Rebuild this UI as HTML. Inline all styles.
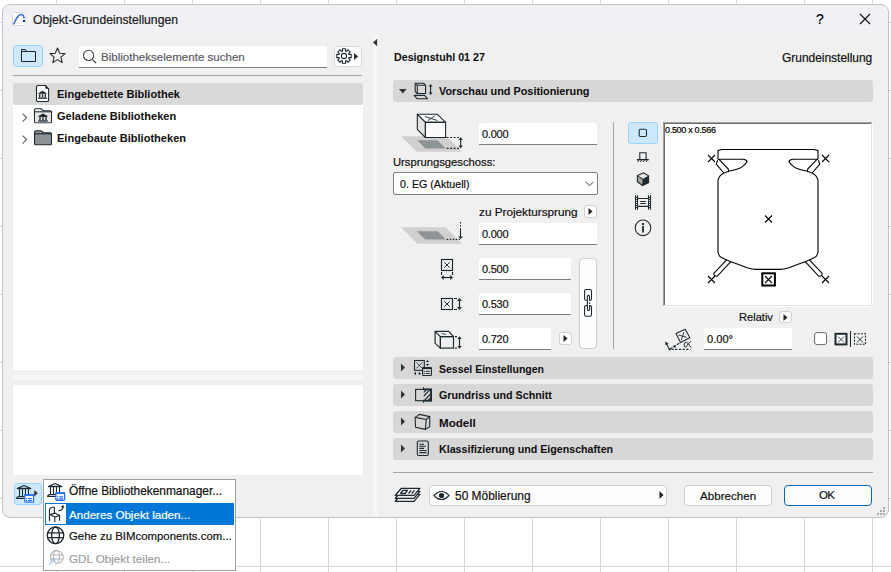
<!DOCTYPE html>
<html><head><meta charset="utf-8">
<style>
html,body{margin:0;padding:0;}
body{width:891px;height:572px;overflow:hidden;position:relative;background-color:#fff;
background-image:linear-gradient(to right,#d8d8d8 1px,transparent 1px),linear-gradient(to bottom,#d8d8d8 1px,transparent 1px);
background-size:68px 68px;background-position:56px 0,0 22px;
font-family:"Liberation Sans",sans-serif;color:#000;}
.a{position:absolute;}
.t{position:absolute;white-space:nowrap;line-height:1;-webkit-text-stroke:0.2px currentColor;}
.b{font-weight:bold;-webkit-text-stroke:0.06px currentColor;}
svg{position:absolute;overflow:visible;}
.dlg{left:2px;top:4px;width:885px;height:512px;border:1px solid #c3c3c3;border-radius:8px;background:#f0f0f0;overflow:hidden;}
.title{left:0;top:0;width:885px;height:30px;background:#f0f0f5;}
.inp{position:absolute;background:#fff;border-bottom:1px solid #7d7d7d;box-sizing:border-box;border-radius:2px 2px 0 0;}
.hdr{position:absolute;left:393px;width:480px;height:22px;background:#d7d7d7;border-radius:3px;}
.btn{position:absolute;box-sizing:border-box;background:#fdfdfd;border:1px solid #cfcfcf;border-radius:4px;}
.tbtn{position:absolute;box-sizing:border-box;background:#cce8ff;border:1px solid #99d1ff;border-radius:3px;}
</style></head><body>
<!-- dialog frame -->
<div class="a dlg"><div class="a title"></div></div>

<!-- title -->
<svg style="left:12px;top:12px" width="14" height="14" viewBox="0 0 14 14">
<rect x="0.5" y="0.5" width="13" height="13" fill="#fff" stroke="#dcdcdc" stroke-width="1" rx="1"/>
<path d="M1.5 12.5 C4 7 6 2.5 9 2.5 C11 2.5 12 4.5 12 6.5" fill="none" stroke="#3a6fe0" stroke-width="1.6"/>
<rect x="11" y="8" width="2" height="2" fill="#0a2a9a"/>
</svg>
<div class="t" id="ttl" style="left:33px;top:14px;font-size:12.2px;color:#1a1a1a;">Objekt-Grundeinstellungen</div>
<div class="t" style="left:816px;top:12px;font-size:14px;color:#000;">?</div>
<svg style="left:860px;top:14px" width="10" height="10" viewBox="0 0 10 10"><path d="M0 0L10 10M10 0L0 10" stroke="#111" stroke-width="1.1"/></svg>

<!-- LEFT PANEL -->
<div class="tbtn" style="left:13px;top:45px;width:30px;height:22px;"></div>
<svg style="left:21px;top:49px" width="15" height="13" viewBox="0 0 15 13"><path d="M0.5 12.5V0.5H4.5L5.5 2.5H14.5V12.5Z" fill="none" stroke="#222" stroke-width="1"/><path d="M0.5 2.5H5.5" stroke="#222" stroke-width="1"/></svg>
<svg style="left:49px;top:47px" width="17" height="17" viewBox="0 0 17 17"><path d="M8.5 1L10.7 6.2L16 6.6L11.9 10.1L13.2 15.6L8.5 12.6L3.8 15.6L5.1 10.1L1 6.6L6.3 6.2Z" fill="none" stroke="#2a2a2a" stroke-width="1.1" stroke-linejoin="round"/></svg>

<div class="inp" style="left:79px;top:46px;width:248px;height:22px;"></div>
<svg style="left:83px;top:50px" width="14" height="14" viewBox="0 0 14 14"><circle cx="5.6" cy="5.4" r="5.1" fill="none" stroke="#444" stroke-width="1.1"/><path d="M9.6 9.6L13 13" stroke="#444" stroke-width="1.2"/></svg>
<div class="t" id="srch" style="left:101px;top:52px;font-size:11.55px;color:#5c5c66;">Bibliothekselemente suchen</div>

<div class="btn" style="left:334px;top:46px;width:28px;height:21px;border-color:#d9d9d9;background:#fff;"></div>
<svg style="left:332px;top:44px" width="32" height="26" viewBox="332 44 32 26">
<path d="M342.48 51.03 L342.34 48.79 L345.66 48.79 L345.52 51.03 A5.2 5.2 0 0 1 346.44 51.41 L347.92 49.72 L350.28 52.08 L348.59 53.56 A5.2 5.2 0 0 1 348.97 54.48 L351.21 54.34 L351.21 57.66 L348.97 57.52 A5.2 5.2 0 0 1 348.59 58.44 L350.28 59.92 L347.92 62.28 L346.44 60.59 A5.2 5.2 0 0 1 345.52 60.97 L345.66 63.21 L342.34 63.21 L342.48 60.97 A5.2 5.2 0 0 1 341.56 60.59 L340.08 62.28 L337.72 59.92 L339.41 58.44 A5.2 5.2 0 0 1 339.03 57.52 L336.79 57.66 L336.79 54.34 L339.03 54.48 A5.2 5.2 0 0 1 339.41 53.56 L337.72 52.08 L340.08 49.72 L341.56 51.41 A5.2 5.2 0 0 1 342.48 51.03 Z" fill="none" stroke="#1e2a30" stroke-width="1.1" stroke-linejoin="round"/>
<circle cx="344" cy="56" r="2.6" fill="none" stroke="#1e2a30" stroke-width="1.1"/>
<path d="M354 52.9L358.2 56.4L354 59.9Z" fill="#333"/>
</svg>

<div class="a" style="left:13px;top:75px;width:349px;height:1px;background:#a3a3a3;"></div>
<div class="a" style="left:13px;top:83px;width:350px;height:287px;background:#fff;"></div>
<div class="a" style="left:13px;top:83px;width:350px;height:22px;background:#d9d9d9;border-radius:2px;"></div>

<!-- tree row icons -->
<svg style="left:34px;top:84px" width="18" height="20" viewBox="34 84 18 20">
<path d="M36.5 86.8Q36.5 85.5 37.8 85.5H45.3L48.6 88.8V100.2Q48.6 101.5 47.3 101.5H37.8Q36.5 101.5 36.5 100.2Z" fill="#fff" stroke="#1e2a30" stroke-width="1.1" stroke-linejoin="round"/>
<path d="M45.3 85.5V88.8H48.6Z" fill="#1e2a30"/>
<path d="M38.3 93.2L42.5 90.8L46.7 93.2Z" fill="#1e2a30"/><rect x="38.4" y="93.2" width="8.2" height="1" fill="#1e2a30"/>
<rect x="39" y="94.4" width="1.4" height="3" fill="#1e2a30"/><rect x="41.8" y="94.4" width="1.4" height="3" fill="#1e2a30"/><rect x="44.6" y="94.4" width="1.4" height="3" fill="#1e2a30"/>
<rect x="38" y="97.5" width="9" height="1.3" fill="#1e2a30"/>
</svg>
<div class="t b" style="left:57px;top:89px;font-size:11px;letter-spacing:0.03px;color:#111;">Eingebettete Bibliothek</div>

<svg style="left:21px;top:113px" width="7" height="10" viewBox="0 0 7 10"><path d="M1.6 0.6L5.6 4.6L1.6 8.6" fill="none" stroke="#666" stroke-width="1.2"/></svg>
<svg style="left:32px;top:106px" width="22" height="19" viewBox="32 106 22 19">
<path d="M34.5 121.5V110Q34.5 108.7 35.8 108.7H40.5Q41.5 108.7 42.3 109.6L43.3 110.7H50.2Q51.5 110.7 51.5 112V121.5Q51.5 122.8 50.2 122.8H35.8Q34.5 122.8 34.5 121.5Z" fill="#fff" stroke="#1e2a30" stroke-width="1.1"/>
<rect x="35.1" y="112.4" width="15.8" height="9.8" fill="#e6e6e6"/>
<path d="M34.5 111.8H51.5" stroke="#1e2a30" stroke-width="1.1"/>
<path d="M38.5 116L43 113.6L47.5 116Z" fill="#1e2a30"/><rect x="38.6" y="116" width="8.8" height="1" fill="#1e2a30"/>
<rect x="39.3" y="117.2" width="1.4" height="3" fill="#1e2a30"/><rect x="42.3" y="117.2" width="1.4" height="3" fill="#1e2a30"/><rect x="45.3" y="117.2" width="1.4" height="3" fill="#1e2a30"/>
<rect x="38.3" y="120.3" width="9.4" height="1.3" fill="#1e2a30"/>
</svg>
<div class="t b" style="left:57px;top:111px;font-size:11px;letter-spacing:0.03px;color:#111;">Geladene Bibliotheken</div>

<svg style="left:21px;top:135px" width="7" height="10" viewBox="0 0 7 10"><path d="M1.6 0.6L5.6 4.6L1.6 8.6" fill="none" stroke="#666" stroke-width="1.2"/></svg>
<svg style="left:32px;top:128px" width="22" height="19" viewBox="32 128 22 19">
<path d="M34.5 143.5V132Q34.5 130.7 35.8 130.7H40.5Q41.5 130.7 42.3 131.6L43.3 132.7H50.2Q51.5 132.7 51.5 134V143.5Q51.5 144.8 50.2 144.8H35.8Q34.5 144.8 34.5 143.5Z" fill="#8c9196" stroke="#1e2a30" stroke-width="1.1"/>
<path d="M34.5 133.8H51.5" stroke="#1e2a30" stroke-width="1.1"/>
</svg>
<div class="t b" style="left:57px;top:133px;font-size:11px;letter-spacing:0.03px;color:#111;">Eingebaute Bibliotheken</div>

<div class="a" style="left:13px;top:375px;width:350px;height:5px;background:#f7f7f7;"></div>
<div class="a" style="left:13px;top:385px;width:350px;height:90px;background:#fff;"></div>

<div class="tbtn" style="left:14px;top:483px;width:28px;height:22px;"></div>

<!-- splitter -->
<div class="a" style="left:373px;top:35px;width:5px;height:482px;background:#f6f6f6;"></div>
<svg style="left:370px;top:36px" width="10" height="12" viewBox="370 36 10 12"><path d="M377.2 38.7L373 42.45L377.2 46.2Z" fill="#333"/></svg>


<!-- RIGHT PANEL -->
<div class="t b" style="left:394px;top:52px;font-size:10.7px;color:#111;">Designstuhl 01 27</div>
<div class="t" style="left:782px;top:53px;font-size:11.95px;color:#111;">Grundeinstellung</div>

<div class="hdr" style="top:80px;"></div>
<svg style="left:399px;top:89px" width="8" height="5" viewBox="0 0 8 5"><path d="M0 0H7.5L3.75 4.5Z" fill="#333"/></svg>
<svg style="left:410px;top:80px" width="26" height="22" viewBox="0 0 26 22">
<g fill="none" stroke="#1e2a30" stroke-width="1.1" stroke-linejoin="round">
<path d="M5.2 11.5V3.3H13.7L15.6 5.2"/><path d="M5.2 3.3L7.3 5.2M5.2 11.5L7.3 13.5"/>
<rect x="7.3" y="5.2" width="8.3" height="8.3"/>
<path d="M4.2 15.4H14.6L17.5 18.7H7.1Z"/>
<path d="M20.6 5V14"/></g>
<path d="M18.7 6.5L20.6 4L22.5 6.5ZM18.7 12.5L20.6 15L22.5 12.5Z" fill="#1e2a30"/>
</svg>
<div class="t b" style="left:439px;top:86px;font-size:10.85px;color:#111;">Vorschau und Positionierung</div>

<!-- box elevation icon -->
<svg style="left:398px;top:110px" width="70" height="46" viewBox="398 110 70 46">
<path d="M401.1 136.3H446.6L462.2 151.7H416.8Z" fill="#d0d0d0"/>
<path d="M417.3 140.2H437.5L445.6 148.6H425.4Z" fill="#8e9396"/>
<g stroke="#1e2a30" stroke-width="1.1" stroke-linejoin="round">
<path d="M417.3 114.3H437.5L445.6 122.4H425.4Z" fill="#f8f8f8"/>
<path d="M417.3 114.3L425.4 122.4V137.5L417.3 129.4Z" fill="#e4e4e4"/>
<rect x="425.4" y="122.4" width="20.2" height="15.1" fill="#fafafa"/>
<path d="M425 116.5L437.5 120.5M428 120.5L434.5 116" fill="none" stroke-width="0.9"/>
<path d="M446.6 137.5H460M446.6 148.4H460" stroke-dasharray="2 1.5" fill="none"/>
<path d="M460.7 139V146.5" fill="none"/>
</g>
<path d="M458.5 140L460.7 137.3L462.9 140ZM458.5 145.5L460.7 148.2L462.9 145.5Z" fill="#1e2a30"/>
</svg>

<div class="inp" style="left:479px;top:123px;width:118px;height:22px;"></div>
<div class="t" style="left:482px;top:129px;font-size:11px;letter-spacing:-0.25px;color:#111;">0.000</div>

<div class="t" style="left:393px;top:157px;font-size:11.24px;color:#111;">Ursprungsgeschoss:</div>
<div class="a" style="left:393px;top:172px;width:205px;height:23px;box-sizing:border-box;background:#fff;border:1px solid #7f7f7f;border-radius:2px;"></div>
<div class="t" style="left:400px;top:179px;font-size:10.7px;color:#111;">0. EG (Aktuell)</div>
<svg style="left:585px;top:181px" width="9" height="6" viewBox="0 0 9 6"><path d="M0.5 0.8L4.5 4.8L8.5 0.8" fill="none" stroke="#444" stroke-width="1"/></svg>

<!-- vertical separator -->
<div class="a" style="left:613px;top:122px;width:1px;height:227px;background:#a8a8a8;"></div>

<div class="t" style="left:479px;top:206px;font-size:11.76px;color:#111;">zu Projektursprung</div>
<div class="btn" style="left:584px;top:205px;width:13px;height:13px;border-radius:3px;"></div>
<svg style="left:588px;top:208px" width="5" height="7" viewBox="0 0 5 7"><path d="M0.5 0L4.5 3.5L0.5 7Z" fill="#222"/></svg>

<svg style="left:398px;top:218px" width="70" height="30" viewBox="398 218 70 30">
<path d="M401.1 227.3H445.5L462 243.8H417.2Z" fill="#d0d0d0"/>
<path d="M416.9 231.2H437.7L445.9 239.6H425.1Z" fill="#8e9396"/>
<g stroke="#1e2a30" stroke-width="1.1" fill="none">
<path d="M446.7 239.4H460" stroke-dasharray="1.5 1.5"/>
<path d="M460.5 221.9V227.4" stroke-dasharray="1.5 1.5"/>
<path d="M460.5 228.2V237"/>
</g>
<path d="M458.1 236.5L460.5 239L462.9 236.5Z" fill="#1e2a30"/>
</svg>
<div class="inp" style="left:479px;top:223px;width:118px;height:22px;"></div>
<div class="t" style="left:482px;top:229px;font-size:11px;letter-spacing:-0.25px;color:#111;">0.000</div>

<svg style="left:432px;top:255px" width="36" height="100" viewBox="432 255 36 100">
<g stroke="#1e2a30" stroke-width="1.2" fill="none">
<rect x="441.5" y="259.5" width="11" height="11"/>
<path d="M444.3 262.3L449.7 267.7M449.7 262.3L444.3 267.7" stroke-width="1"/>
<path d="M441.5 272V275M452.5 272V275"/>
<path d="M443 277.5H451"/>
<rect x="441.5" y="298.5" width="11" height="11"/>
<path d="M444.3 301.3L449.7 306.7M449.7 301.3L444.3 306.7" stroke-width="1"/>
<path d="M454 298.5H457M454 309.5H457" />
<path d="M459.5 300V308"/>
<path d="M435.1 331.3H448.8L453.5 336.6H440.4ZM435.1 331.3V343.4L440.4 348.1V336.6" stroke-linejoin="round"/>
<rect x="440.4" y="336.6" width="13.1" height="11.5"/>
<path d="M441.5 333.5L446 334.5" stroke-width="0.8"/>
<path d="M455 336.6H457M455 348.1H457"/>
<path d="M459.5 338.5V346.5"/>
</g>
<g fill="#1e2a30">
<path d="M441 277.5L443.8 275V280ZM453 277.5L450.2 275V280Z"/>
<path d="M457 300.8L459.5 298L462 300.8ZM457 307.2L459.5 310L462 307.2Z"/>
<path d="M457.3 339L459.5 336.3L461.7 339ZM457.3 346L459.5 348.7L461.7 346Z"/>
</g>
</svg>

<div class="inp" style="left:479px;top:258px;width:92px;height:22px;"></div>
<div class="t" style="left:482px;top:264px;font-size:11px;letter-spacing:-0.25px;color:#111;">0.500</div>
<div class="inp" style="left:479px;top:293px;width:92px;height:22px;"></div>
<div class="t" style="left:482px;top:299px;font-size:11px;letter-spacing:-0.25px;color:#111;">0.530</div>
<div class="inp" style="left:479px;top:328px;width:72px;height:22px;"></div>
<div class="t" style="left:482px;top:334px;font-size:11px;letter-spacing:-0.25px;color:#111;">0.720</div>
<div class="btn" style="left:559px;top:332px;width:13px;height:13px;border-radius:3px;"></div>
<svg style="left:563px;top:335px" width="5" height="7" viewBox="0 0 5 7"><path d="M0.5 0L4.5 3.5L0.5 7Z" fill="#222"/></svg>

<div class="btn" style="left:579px;top:258px;width:18px;height:91px;border-radius:4px;"></div>
<svg style="left:576px;top:284px" width="24" height="38" viewBox="576 284 24 38">
<g stroke="#1e2a30" stroke-width="1.1" fill="none" stroke-linejoin="round" stroke-linecap="round">
<path d="M586.5 300.2H586.1Q584.6 300.2 584.6 298.7V291Q584.6 289.5 586.1 289.5H590Q591.5 289.5 591.5 291V298.7Q591.5 300.2 590 300.2H589.9"/>
<path d="M586.5 305.6H586.1Q584.6 305.6 584.6 307.1V314.8Q584.6 316.3 586.1 316.3H590Q591.5 316.3 591.5 314.8V307.1Q591.5 305.6 590 305.6H589.9"/>
<path d="M589.6 300.5V296.7Q589.6 295.4 588.5 295.4Q587.4 295.4 587.4 296.7V309.2Q587.4 310.5 588.5 310.5Q589.6 310.5 589.6 309.2V305.5"/>
</g>
<rect x="589" y="302.3" width="1.2" height="1.6" fill="#1e2a30"/>
</svg>

<!-- preview toolbar -->
<div class="tbtn" style="left:628px;top:122px;width:30px;height:22px;"></div>
<svg style="left:628px;top:120px" width="30" height="120" viewBox="628 120 30 120">
<g stroke="#1e2a30" stroke-width="1.1" fill="none">
<rect x="639.2" y="129.2" width="7.3" height="7.3" rx="1.2"/>
<path d="M639.8 159.2V152.7H646.1V159.2"/>
<path d="M636.8 159.6H648.8" stroke-width="1.3"/>
<path d="M637.6 162L638.8 160M640.4 162L641.6 160M643.2 162L644.4 160M646 162L647.2 160" stroke-width="1"/>
<path d="M635.5 195.2V209.7M637.5 195.2V209.7M648.5 195.2V209.7M650.5 195.2V209.7M637.5 198.5H648.5M637.5 206.4H648.5"/>
<path d="M640.2 201.5H645.8M640.2 203.5H645.8" stroke-width="1"/>
<circle cx="643" cy="227.8" r="7.8"/>
</g>
<path d="M643.5 172.2L649.1 175.5V183L642.4 186.2L636.8 181.9V175.2Z" fill="#1e2a30"/>
<path d="M643.5 173.4L647.9 176L643.2 178.7L638.1 175.7Z" fill="#e8e8e8"/>
<path d="M637.9 176.6L642.5 179.6L642.3 184.8L637.9 181.3Z" fill="#a4a4a4"/>
<rect x="635" y="197" width="3" height="11" fill="#1e2a30"/><rect x="648" y="197" width="3" height="11" fill="#1e2a30"/><g fill="#f4f4f4"><rect x="636" y="197.9" width="1" height="1.1"/><rect x="636" y="199.9" width="1" height="1.1"/><rect x="636" y="201.9" width="1" height="1.1"/><rect x="636" y="203.9" width="1" height="1.1"/><rect x="636" y="205.9" width="1" height="1.1"/><rect x="649" y="197.9" width="1" height="1.1"/><rect x="649" y="199.9" width="1" height="1.1"/><rect x="649" y="201.9" width="1" height="1.1"/><rect x="649" y="203.9" width="1" height="1.1"/><rect x="649" y="205.9" width="1" height="1.1"/></g>
<rect x="642" y="223" width="2" height="2" fill="#1e2a30"/>
<rect x="642.1" y="226" width="1.8" height="6.5" fill="#1e2a30"/>
</svg>

<!-- preview -->
<div class="a" style="left:663px;top:122px;width:210px;height:185px;box-sizing:border-box;background:#fff;border-top:2px solid #6e6e6e;border-left:2px solid #6e6e6e;border-right:2px solid #e6e6e6;border-bottom:2px solid #e6e6e6;"></div>
<div class="a" style="left:871px;top:122px;width:2px;height:185px;box-sizing:border-box;border-left:1px solid #e3e3e3;border-right:1px solid #fff;"></div>
<div class="a" style="left:663px;top:305px;width:210px;height:2px;box-sizing:border-box;border-top:1px solid #e3e3e3;border-bottom:1px solid #fff;"></div>
<div class="a" style="left:663px;top:122px;width:1px;height:184px;background:#a0a0a0;"></div>
<div class="a" style="left:663px;top:122px;width:209px;height:1px;background:#a0a0a0;"></div>
<div class="t" style="left:665px;top:126px;font-size:9px;letter-spacing:-0.3px;color:#000;">0.500 x 0.566</div>
<svg style="left:663px;top:122px" width="210" height="185" viewBox="663 122 210 185">
<g stroke="#000" stroke-width="1.1" fill="none">
<path d="M718 159.4V150.4L722 149.5H814L818 150.4V159.4"/>
<path d="M718 159.3H743.1Q746.5 159.8 747 161.4Q745 165 741.4 167.4Q736 170 728.8 171.2L723.9 173"/>
<path d="M818 159.3H792.9Q789.5 159.8 789 161.4Q791 165 794.6 167.4Q800 170 807.2 171.2L812.1 173"/>
<path d="M719 159.3L728.1 168.8L728.8 171.2M717.6 160.2L716.2 164.2L723.9 173"/>
<path d="M817 159.3L807.9 168.8L807.2 171.2M818.4 160.2L819.8 164.2L812.1 173"/>
<path d="M723.9 173Q719.5 175 718 180V252Q719 257 722 257.8Q725 259.5 727.8 260.4L747.2 267.8Q752 269.4 756.6 269.4H779.4Q784 269.4 788.8 267.8L808.2 260.4Q811 259.5 814 257.8Q817 257 818 252V180Q816.5 175 812.1 173"/>
<path d="M726.5 259.8L713.8 273.5Q713.8 276.5 717.2 276.3L730.8 261.6"/>
<path d="M809.5 259.8L822.2 273.5Q822.2 276.5 818.8 276.3L805.2 261.6"/>
<path d="M708 155L715 162M715 155L708 162"/>
<path d="M822 155L829 162M829 155L822 162"/>
<path d="M708 276L715 283M715 276L708 283"/>
<path d="M822 276L829 283M829 276L822 283"/>
<path d="M765 215.5L772 222.5M772 215.5L765 222.5"/>
<rect x="762.3" y="273.3" width="12.6" height="12.2" stroke-width="2"/>
<path d="M765 276L772 283M772 276L765 283"/>
</g>
</svg>

<div class="t" style="left:739px;top:312px;font-size:11.1px;color:#111;">Relativ</div>
<div class="btn" style="left:779px;top:311px;width:13px;height:12px;border-radius:3px;"></div>
<svg style="left:783px;top:314px" width="5" height="7" viewBox="0 0 5 7"><path d="M0.5 0L4.5 3.5L0.5 7Z" fill="#222"/></svg>

<svg style="left:660px;top:325px" width="40" height="30" viewBox="660 325 40 30">
<g stroke="#1e2a30" stroke-width="1.1" fill="none" stroke-linejoin="round">
<path d="M676 333.4L685.2 329.2L689.9 337.8L680.5 342.6Z"/>
<path d="M678.4 335L686.7 337.3M683.9 332.3L681.2 340.2" stroke-width="0.9"/>
<path d="M671.5 349.4H690.5" stroke-dasharray="2.2 1.5"/>
<path d="M669.5 349.4L666.6 344"/>
<path d="M669.5 349.2L672.5 347.4M676.8 344.7L679.4 343.3"/>
<path d="M690.9 341.3Q688 343.5 686.8 345.8Q685.8 347.6 684.9 347.1Q684 346.4 684.2 344.6Q684.5 342.2 686.4 342.2Q688 342.4 690.9 347.6" stroke-width="1"/>
</g>
<path d="M665 341.6L668.6 343.6L665.6 345.4Z" fill="#1e2a30"/>
<path d="M676.3 345L675 348.2L672.6 345.8Z" fill="#1e2a30"/>
<rect x="668.6" y="348.8" width="2" height="1.4" fill="#1e2a30"/>
</svg>
<div class="inp" style="left:704px;top:328px;width:88px;height:22px;"></div>
<div class="t" style="left:707px;top:334px;font-size:11.1px;color:#111;">0.00°</div>

<svg style="left:808px;top:326px" width="64" height="26" viewBox="808 326 64 26">
<rect x="814.6" y="332.6" width="12" height="12" rx="2.5" fill="#fff" stroke="#666" stroke-width="1"/>
<rect x="835.5" y="333.8" width="11" height="10.6" fill="#fff" stroke="#1e2a30" stroke-width="2"/>
<path d="M838 336.5L844 342.5M844 336.5L838 342.5" stroke="#1e2a30" stroke-width="0.9"/>
<path d="M850.5 331V347" stroke="#1e2a30" stroke-width="1.1"/>
<rect x="854.5" y="333.7" width="11" height="10.6" fill="none" stroke="#1e2a30" stroke-width="1.1" stroke-dasharray="2 1.2"/>
<path d="M857 336.5L863 342.5M863 336.5L857 342.5" stroke="#1e2a30" stroke-width="0.9"/>
</svg>

<!-- collapsed sections -->
<div class="hdr" style="top:357px;"></div>
<div class="hdr" style="top:384px;"></div>
<div class="hdr" style="top:411px;"></div>
<div class="hdr" style="top:438px;"></div>
<svg style="left:400px;top:357px" width="6" height="110" viewBox="0 0 6 110">
<path d="M1 6.5L5 10.5L1 14.5Z M1 33.5L5 37.5L1 41.5Z M1 60.5L5 64.5L1 68.5Z M1 87.5L5 91.5L1 95.5Z" fill="#333"/>
</svg>
<svg style="left:410px;top:357px" width="26" height="110" viewBox="0 0 26 110">
<g stroke="#1e2a30" stroke-width="1.1" fill="none">
<rect x="4.5" y="3.5" width="9.8" height="9.8"/>
<path d="M6.5 5.5L12.3 11.3M12.3 5.5L6.5 11.3" stroke-width="0.8"/>
<rect x="12.6" y="10.5" width="8.8" height="8" fill="#d9d9d9" rx="0.8"/>
<path d="M12.6 11.3H21.4" stroke-width="1.6"/>
<path d="M15.6 14.4H19.8M15.6 16.5H19.8" stroke-width="0.9"/>
</g>
<g fill="#1e2a30">
<rect x="13.8" y="13.9" width="1" height="1"/><rect x="13.8" y="16" width="1" height="1"/>
<path d="M15.9 5.1L17.5 3.1L19.1 5.1Z M15.9 7L17.5 9L19.1 7Z M6 14.8L3.8 16.5L6 18.2Z M8.8 14.8L11 16.5L8.8 18.2Z"/>
</g>
<g transform="translate(0,27)" stroke="#1e2a30" fill="none">
<rect x="5.6" y="5.4" width="15.5" height="11.3" stroke-width="1.1"/>
<path d="M13.5 5.4H21.1V16.7H13.5" stroke-width="1.8"/>
<path d="M13.8 8.3L16.2 5.9M13.8 12L19.6 6.2M14.8 15.8L20.6 10M18.4 16.2L20.6 14" stroke-width="1.2"/>
<path d="M13.5 3.3V5M13.5 17V18.8" stroke-width="1.1"/>
</g>
<g transform="translate(0,54)" stroke="#1e2a30" stroke-width="1.1" fill="none" stroke-linejoin="round">
<path d="M5.1 6.4L9.4 3.4L19.7 5.6L16.2 8.5Z"/>
<path d="M5.1 6.4L5.6 16.2L15.4 18.4L16.2 8.5"/>
<path d="M19.7 5.6V15.8L15.4 18.4"/>
</g>
<g transform="translate(0,81)" stroke="#1e2a30" fill="none">
<rect x="7.3" y="3" width="11" height="14.5" rx="1.2" stroke-width="1.1"/>
<path d="M9.3 6.2H14M9.3 8.3H16M9.3 10.4H14M9.3 12.5H16.6M9.3 14.6H16.6" stroke-width="1.1"/>
</g>
</svg>
<div class="t b" style="left:439px;top:364px;font-size:10.5px;color:#111;">Sessel Einstellungen</div>
<div class="t b" style="left:439px;top:390px;font-size:10.69px;color:#111;">Grundriss und Schnitt</div>
<div class="t b" style="left:439px;top:417px;font-size:11.6px;color:#111;">Modell</div>
<div class="t b" style="left:439px;top:444px;font-size:10.66px;color:#111;">Klassifizierung und Eigenschaften</div>

<!-- bottom bar -->
<div class="a" style="left:393px;top:472px;width:480px;height:1px;background:#a3a3a3;"></div>
<svg style="left:390px;top:482px" width="35" height="26" viewBox="390 482 35 26">
<g stroke="#1e2a30" stroke-width="1.3" fill="#f0f0f0" stroke-linejoin="round">
<path d="M401.4 494.3H419.9L414 501.3H395.3Z"/>
<path d="M401.4 491.3H419.9L414 498.3H395.3Z"/>
<path d="M401.4 488.3H419.9L414 495.3H395.3Z"/>
<path d="M402.9 490.3H407.4L405.1 493.5H400.6Z" stroke-width="1.3"/>
<path d="M411.2 490.3L408.5 493.5M414.6 490.3L411.7 493.5" stroke-width="1.2" fill="none"/>
</g>
</svg>
<div class="btn" style="left:429px;top:485px;width:238px;height:21px;"></div>
<svg style="left:433px;top:490px" width="18" height="11" viewBox="0 0 18 11">
<path d="M1 5.5Q8.5 -2.5 16 5.5Q8.5 13.5 1 5.5Z" fill="none" stroke="#1e2a30" stroke-width="1.1"/>
<circle cx="8.5" cy="5.5" r="2.6" fill="#1e2a30"/>
</svg>
<div class="t" style="left:455px;top:491px;font-size:11.95px;color:#111;">50 Möblierung</div>
<svg style="left:659px;top:491px" width="5" height="8" viewBox="0 0 5 8"><path d="M0.5 0L4.5 4L0.5 8Z" fill="#222"/></svg>

<div class="btn" style="left:684px;top:485px;width:88px;height:21px;"></div>
<div class="t" style="left:700px;top:490px;font-size:11.6px;color:#111;">Abbrechen</div>
<div class="btn" style="left:784px;top:485px;width:88px;height:21px;border-color:#0067c0;"></div>
<div class="t" style="left:819px;top:490px;font-size:11.5px;letter-spacing:-0.8px;color:#111;">OK</div>

<svg style="left:876px;top:506px" width="9" height="9" viewBox="0 0 9 9"><g fill="#a8a8a8"><rect x="7" y="1" width="2" height="2"/><rect x="4" y="4" width="2" height="2"/><rect x="7" y="4" width="2" height="2"/><rect x="1" y="7" width="2" height="2"/><rect x="4" y="7" width="2" height="2"/><rect x="7" y="7" width="2" height="2"/></g></svg>

<!-- library button icon -->
<svg style="left:12px;top:480px" width="30" height="28" viewBox="12 480 30 28">
<g stroke="#1e2a30" fill="none" stroke-width="1.1" stroke-linejoin="round">
<path d="M17.6 488.3L24 485.5L30.4 488.3Z"/>
<path d="M16.8 488.6H31.2" stroke-width="1.2"/>
<path d="M19.5 489V496.2M22.5 489V496.2M25.5 489V494M28.5 489V494"/>
<path d="M18.3 496.5H26M16.3 498.4H26"/>
<path d="M18.3 496.5L16.3 498.4"/>
</g>
<path d="M34.2 490.1L37.8 493.3L34.2 496.6Z" fill="#3a3434"/>
<rect x="24.75" y="494.75" width="8.8" height="7.4" rx="1" fill="#fff" stroke="#2a72f0" stroke-width="1.3"/>
<rect x="24.2" y="494.1" width="9.9" height="1.9" fill="#2a72f0"/>
<g fill="#2a72f0"><rect x="26" y="498" width="1.2" height="1.2"/><rect x="26" y="500" width="1.2" height="1.2"/><rect x="28.2" y="498" width="3.7" height="1.2"/><rect x="28.2" y="500" width="3.7" height="1.2"/></g>
</svg>

<!-- popup menu -->
<div class="a" style="left:43px;top:479px;width:193px;height:92px;box-sizing:border-box;background:#fff;border:1px solid #a0a0a0;"></div>
<div class="a" style="left:45px;top:503px;width:189px;height:22px;box-sizing:border-box;background:#0078d7;"></div>
<div class="a" style="left:46px;top:504px;width:20px;height:20px;background:#fff;"></div>
<svg style="left:44px;top:480px" width="26" height="90" viewBox="44 480 26 90">
<g stroke="#1e2a30" fill="none" stroke-width="1.1" stroke-linejoin="round">
<path d="M48.8 486.3L55.1 483.5L61.4 486.3Z"/>
<path d="M48 486.6H62.2" stroke-width="1.2"/>
<path d="M50.5 487V494.2M53.5 487V494.2M56.5 487V492M59.5 487V492"/>
<path d="M49.3 494.5H57M47.3 496.4H57"/>
<path d="M49.3 494.5L47.3 496.4"/>
</g>
<rect x="55.85" y="492.85" width="8.8" height="7.4" rx="1" fill="#fff" stroke="#2a72f0" stroke-width="1.3"/>
<rect x="55.3" y="492.2" width="9.9" height="1.9" fill="#2a72f0"/>
<g fill="#2a72f0"><rect x="57.1" y="496.1" width="1.2" height="1.2"/><rect x="57.1" y="498.1" width="1.2" height="1.2"/><rect x="59.3" y="496.1" width="3.7" height="1.2"/><rect x="59.3" y="498.1" width="3.7" height="1.2"/></g>
<g stroke="#1e2a30" stroke-width="1.1" fill="none" stroke-linejoin="round">
<path d="M49.5 520.7V509.2Q50.5 507.8 52.5 507.3L54.4 507.2V513.4"/>
<path d="M50.3 514.5L54.8 513.1L59.6 515.6L54.8 517Z"/>
<path d="M54.8 517V522.3M59.6 515.6V520.7M49.5 514.8V520.7"/>
<path d="M58.5 510.6Q61.5 510.6 62.4 508.9L62.9 506.5"/>
</g>
<path d="M61 507.3L62.9 504.8L64.5 507.8Z" fill="#1e2a30"/>
<g stroke="#1e2a30" stroke-width="1.3" fill="none">
<circle cx="55.5" cy="535.3" r="8.3"/>
<ellipse cx="55.5" cy="535.3" rx="3.9" ry="8.3"/>
<path d="M47.5 532.9H63.5M47.5 537.7H63.5"/>
</g>
<g stroke="#b4b4b4" stroke-width="1.1" fill="none">
<path d="M52 561.5A6.5 6.5 0 1 1 58 563.5"/>
<ellipse cx="56.5" cy="557" rx="3" ry="6.5" />
<path d="M50.3 555H62.7M51 559H62.7"/>
</g>
<path d="M49.2 564.7L54.5 559.4M51.5 559.2H54.7V562.4" stroke="#9cc2f0" stroke-width="1.1" fill="none"/>
</svg>
<div class="t" style="left:69px;top:486px;font-size:11.9px;color:#111;">Öffne Bibliothekenmanager...</div>
<div class="t" style="left:69px;top:509px;font-size:11.6px;color:#fff;">Anderes Objekt laden...</div>
<div class="t" style="left:69px;top:531px;font-size:11.4px;color:#111;">Gehe zu BIMcomponents.com...</div>
<div class="t" style="left:69px;top:553px;font-size:11.65px;color:#a0a0a0;">GDL Objekt teilen...</div>

</body></html>
